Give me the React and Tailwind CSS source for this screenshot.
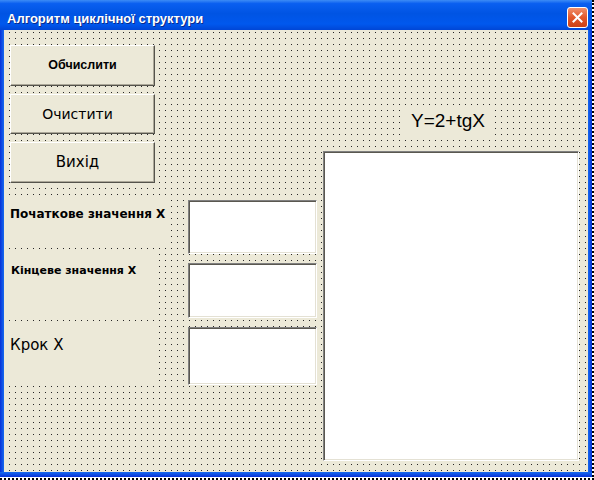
import React from "react";

const dots =
  "bg-[#ece9d8] bg-[image:conic-gradient(from_270deg_at_1px_1px,#262626_90deg,transparent_0)] bg-[length:6px_6px] bg-[position:5px_2px]";

const btn =
  "flex items-center justify-center bg-[#ece9d8] border-t border-l border-t-white border-l-white border-b border-r border-b-[#55544c] border-r-[#55544c] shadow-[inset_-1px_-1px_0_#aca899] text-black";

const tb =
  "bg-white border-t border-l border-t-[#808080] border-l-[#808080] border-b border-r border-b-white border-r-white shadow-[inset_1px_1px_0_#5a5850,inset_-1px_-1px_0_#e4e1d4]";

const dv = "font-['DejaVu_Sans',sans-serif]";
const ls = "font-['Liberation_Sans',Arial,sans-serif]";

export default function App() {
  return (
    <div className="w-[594px] h-[480px] bg-white border-r-2 border-b-2 border-dotted border-black">
      <div className="w-[592px] h-[477px] flex flex-col">
        {/* Title bar */}
        <div className="h-[30px] pt-[4px] flex items-center justify-between bg-[linear-gradient(to_bottom,#3d8cf5_0%,#0a5ff0_12%,#0054e3_45%,#0058ee_80%,#0046d6_100%)]">
          <div
            className={`pl-[7px] mt-[2px] text-white text-[13px] leading-none font-bold ${ls} [text-shadow:1px_1px_0_#0a2a8a]`}
          >
            Алгоритм циклічної структури
          </div>
          <div className="mr-[4px] w-[21px] h-[21px] rounded-[3px] border border-white bg-[linear-gradient(to_bottom,#f0906c_0%,#e2582c_50%,#cc4016_100%)] flex items-center justify-center">
            <svg width="11" height="11" viewBox="0 0 11 11">
              <path d="M1.5 1.5 L9.5 9.5 M9.5 1.5 L1.5 9.5" stroke="#fff" strokeWidth="2" strokeLinecap="square" />
            </svg>
          </div>
        </div>
        {/* Body */}
        <div className="flex flex-1 bg-[#0b46d8]">
          <div className="w-[4px] bg-[linear-gradient(to_right,#0831d9,#166aee)]" />
          <div className={`w-[584px] h-[442px] flex ${dots}`}>
            {/* Left part */}
            <div className="w-[319px] shrink-0 flex flex-col">
              <div className="ml-[6px] mt-[15px] flex flex-col gap-[8px]">
                <div className={`${btn} w-[145px] h-[41px]`}>
                  <span className={`${ls} text-[12.5px] leading-none font-bold`}>Обчислити</span>
                </div>
                <div className={`${btn} w-[145px] h-[40px] pr-[10px]`}>
                  <span className={`${dv} text-[14px] leading-none`}>Очистити</span>
                </div>
                <div className={`${btn} w-[145px] h-[41px] pr-[10px]`}>
                  <span className={`${dv} text-[15px] leading-none`}>Вихід</span>
                </div>
              </div>
              {/* Row 1 */}
              <div className="mt-[13px] flex items-start">
                <div className="ml-[1px] w-[164px] h-[50px] bg-[#ece9d8] pt-[12px] pl-[5px]">
                  <div className={`${dv} text-[12px] leading-none font-bold text-black whitespace-nowrap`}>
                    Початкове значення X
                  </div>
                </div>
                <div className={`${tb} ml-[19px] mt-[4px] w-[129px] h-[54px]`} />
              </div>
              {/* Row 2 */}
              <div className="flex items-start">
                <div className="ml-[1px] w-[149px] h-[64px] bg-[#ece9d8] pt-[11px] pl-[6px]">
                  <div className={`${dv} text-[11px] leading-none font-bold text-black whitespace-nowrap`}>
                    Кінцеве значення X
                  </div>
                </div>
                <div className={`${tb} ml-[34px] mt-[9px] w-[129px] h-[55px]`} />
              </div>
              {/* Row 3 */}
              <div className="mt-[6px] flex items-start">
                <div className="ml-[1px] w-[149px] h-[62px] bg-[#ece9d8] pt-[14px] pl-[5px]">
                  <div className={`${dv} text-[15px] leading-none text-black whitespace-nowrap`}>Крок X</div>
                </div>
                <div className={`${tb} ml-[34px] mt-[3px] w-[129px] h-[58px]`} />
              </div>
            </div>
            {/* Right part */}
            <div className="flex flex-col">
              <div className="ml-[82px] mt-[75px] w-[90px] h-[31px] bg-[#ece9d8] flex items-center pl-[6px]">
                <span className={`${ls} text-[19px] text-black leading-none`}>Y=2+tgX</span>
              </div>
              <div className={`${tb} mt-[15px] w-[256px] h-[310px]`} />
            </div>
          </div>
          <div className="w-[4px] bg-[linear-gradient(to_right,#166aee,#0831d9)]" />
        </div>
        <div className="h-[5px] bg-[linear-gradient(to_bottom,#166aee,#0831d9)]" />
      </div>
    </div>
  );
}
